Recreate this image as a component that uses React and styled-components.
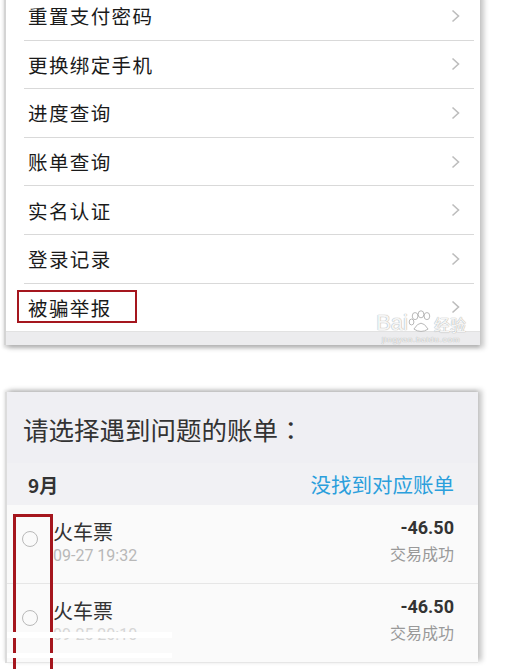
import React from "react";
import styled, { createGlobalStyle } from "styled-components";

const Global = createGlobalStyle`
  html, body { margin: 0; padding: 0; background: #fff; }
  body { width: 512px; height: 669px; overflow: hidden; font-family: "Roboto", "Noto Sans CJK SC", sans-serif; }
`;

const Page = styled.div`
  display: flex;
  flex-direction: column;
  width: 512px;
`;

const MenuCard = styled.div`
  position: relative;
  margin: -8px 0 0 4px;
  width: 474px;
  background: #fff;
  border-left: 2px solid #d4d4d4;
  box-shadow: 4px 3px 5px rgba(0, 0, 0, 0.22), -1px 3px 3px rgba(0, 0, 0, 0.12);
  display: flex;
  flex-direction: column;
`;

const MenuList = styled.div`
  display: flex;
  flex-direction: column;
  margin-left: 18px;
  margin-right: 6px;
`;

const MenuRow = styled.div`
  position: relative;
  height: 47.6px;
  display: flex;
  align-items: center;
  justify-content: space-between;
  padding: 0 14px 0 4px;
  border-bottom: ${(p) => (p.$last ? "none" : "1px solid #d9d9d9")};
  font-size: 19.5px;
  letter-spacing: 1.4px;
  color: #1a1a1a;
  font-family: "Noto Sans CJK SC", sans-serif;
`;

const Highlight = styled.div`
  position: absolute;
  left: -7px;
  top: 6px;
  width: 116px;
  height: 29px;
  border: 2px solid #a5161e;
`;

const FooterStrip = styled.div`
  height: 13px;
  background: #ececee;
  border-top: 1px solid #e2e2e2;
`;

const Watermark = styled.div`
  position: absolute;
  right: 14px;
  bottom: 1px;
  display: flex;
  flex-direction: column;
  align-items: center;
  color: rgba(255, 255, 255, 0.9);
  text-shadow: 0 0 1px #b0b0b0, 0 0 1px #b0b0b0;
  font-family: "Liberation Sans", "Noto Sans CJK SC", sans-serif;
  line-height: 1;
`;

const WmTop = styled.div`
  font-size: 22px;
  display: flex;
  align-items: flex-end;
`;

const WmSmall = styled.span`
  font-size: 16px;
`;

const WmBottom = styled.div`
  font-size: 8px;
  margin-top: 2px;
  letter-spacing: 0.8px;
`;

const BillCard = styled.div`
  margin: 47px 0 0 5px;
  width: 471px;
  background: #fafafa;
  border-left: 2px solid #dcdcdc;
  box-shadow: 4px -2px 5px rgba(0, 0, 0, 0.22), -1px -2px 3px rgba(0, 0, 0, 0.1);
  display: flex;
  flex-direction: column;
  position: relative;
`;

const Header = styled.div`
  height: 71px;
  background: #efeff3;
  display: flex;
  align-items: flex-end;
  padding: 0 0 16px 16px;
  box-sizing: border-box;
  font-family: "Noto Sans CJK SC", sans-serif;
  font-size: 25.5px;
  color: #333;
`;

const Colon = styled.span`
  font-family: "Noto Sans CJK TC", sans-serif;
`;

const MonthRow = styled.div`
  height: 42px;
  background: #f1f1f4;
  display: flex;
  align-items: center;
  justify-content: space-between;
  padding: 0 24px 0 21px;
  font-family: "Noto Sans CJK SC", sans-serif;
`;

const Month = styled.span`
  font-size: 19px;
  font-weight: 700;
  color: #333;
`;

const Link = styled.span`
  font-size: 20.5px;
  color: #2b9fdc;
`;

const Item = styled.div`
  height: 79px;
  box-sizing: border-box;
  display: flex;
  border-bottom: 1px solid #e6e6e6;
  background: #fafafa;
  padding: 0 24px 0 15px;
`;

const Radio = styled.div`
  width: 14px;
  height: 14px;
  border: 1.5px solid #b9b9b9;
  border-radius: 50%;
  margin-top: 26px;
  flex: none;
`;

const Left = styled.div`
  display: flex;
  flex-direction: column;
  margin-left: 15px;
  padding-top: 15px;
  flex: 1;
`;

const Title = styled.div`
  font-family: "Noto Sans CJK SC", sans-serif;
  font-size: 20px;
  line-height: 24px;
  color: #333;
`;

const DateText = styled.div`
  font-family: "Roboto", sans-serif;
  font-size: 16px;
  line-height: 24px;
  color: ${(p) => (p.$faded ? "#d6d6d6" : "#b8b8b8")};
`;

const Right = styled.div`
  display: flex;
  flex-direction: column;
  align-items: flex-end;
  padding-top: 11px;
`;

const Amount = styled.div`
  font-family: "Roboto", sans-serif;
  font-weight: 700;
  font-size: 18px;
  line-height: 24px;
  color: #333;
`;

const Status = styled.div`
  font-family: "Noto Sans CJK SC", sans-serif;
  font-size: 16px;
  line-height: 26px;
  color: #999;
`;

const RedFrame = styled.div`
  position: absolute;
  left: 6px;
  top: 122px;
  width: 34px;
  height: 200px;
  border: 3px solid #a5161e;
  border-bottom: none;
`;

const Gap = styled.div`
  position: absolute;
  left: 0;
  width: 165px;
  height: ${(p) => p.$h}px;
  background: #fff;
`;

const Chevron = () => (
  <svg width="9" height="14" viewBox="0 0 9 14">
    <polyline points="1.5,1.5 7.5,7 1.5,12.5" fill="none" stroke="#bdbdbd" strokeWidth="1.6" />
  </svg>
);

const Paw = () => (
  <svg width="26" height="24" viewBox="0 0 22 20">
    <g fill="#fff" stroke="#b4b4b4" strokeWidth="0.8">
      <ellipse cx="6" cy="5" rx="2.4" ry="3" />
      <ellipse cx="11" cy="3.5" rx="2.4" ry="3" />
      <ellipse cx="16" cy="5" rx="2.4" ry="3" />
      <ellipse cx="3" cy="10" rx="2" ry="2.5" />
      <path d="M5 16 Q11 6 17 16 Q11 20 5 16 Z" />
    </g>
  </svg>
);

const menu = ["重置支付密码", "更换绑定手机", "进度查询", "账单查询", "实名认证", "登录记录", "被骗举报"];

const bills = [
  { date: "09-27 19:32", faded: false },
  { date: "09-25 20:10", faded: true },
];

export default function App() {
  return (
    <Page>
      <Global />
      <MenuCard>
        <MenuList>
          {menu.map((m, i) => (
            <MenuRow key={m} $last={i === menu.length - 1}>
              <span>{m}</span>
              <Chevron />
              {i === menu.length - 1 && <Highlight />}
            </MenuRow>
          ))}
        </MenuList>
        <FooterStrip />
        <Watermark>
          <WmTop>
            Bai<Paw /><WmSmall>经验</WmSmall>
          </WmTop>
          <WmBottom>jingyan.baidu.com</WmBottom>
        </Watermark>
      </MenuCard>
      <BillCard>
        <Header>
          请选择遇到问题的账单<Colon>：</Colon>
        </Header>
        <MonthRow>
          <Month>9月</Month>
          <Link>没找到对应账单</Link>
        </MonthRow>
        {bills.map((b, i) => (
          <Item key={i}>
            <Radio />
            <Left>
              <Title>火车票</Title>
              <DateText $faded={b.faded}>{b.date}</DateText>
            </Left>
            <Right>
              <Amount>-46.50</Amount>
              <Status>交易成功</Status>
            </Right>
          </Item>
        ))}
        <RedFrame />
        <Gap $h={6} style={{ top: 240 }} />
        <Gap $h={5} style={{ top: 261 }} />
      </BillCard>
    </Page>
  );
}
